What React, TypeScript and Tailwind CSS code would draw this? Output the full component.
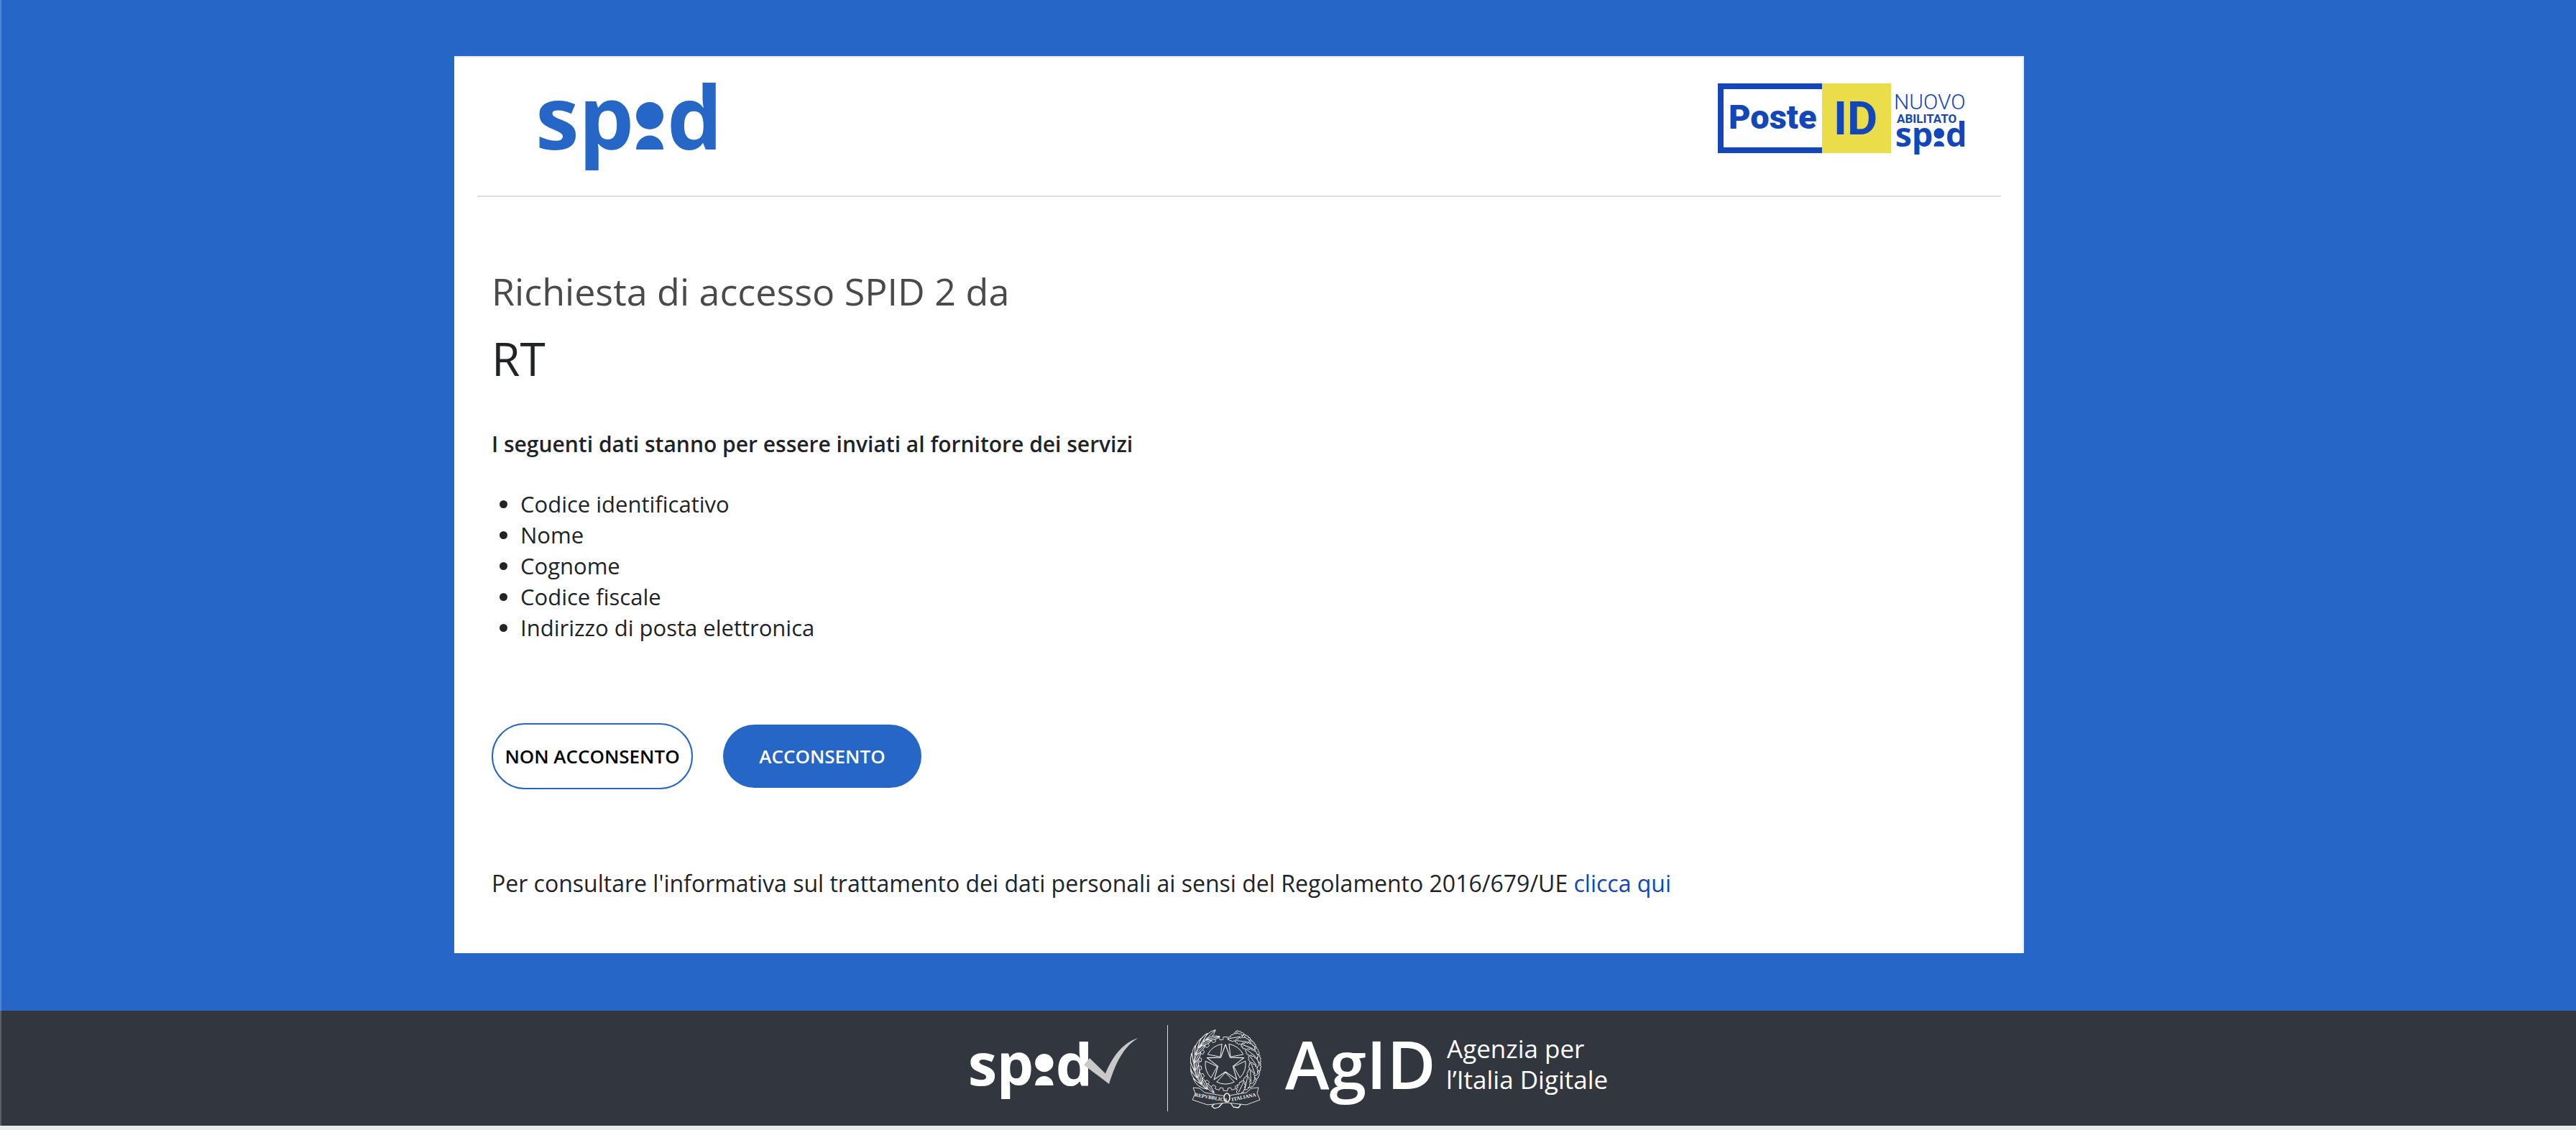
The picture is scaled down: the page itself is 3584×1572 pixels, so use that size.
import React from 'react';

const DATA_FIELDS = [
  'Codice identificativo',
  'Nome',
  'Cognome',
  'Codice fiscale',
  'Indirizzo di posta elettronica',
];

/* Letters and figure of the SPID word mark, drawn in a 244 x 120 box. */
function SpidMark() {
  return (
    <g fill="currentColor" fontFamily="'Open Sans', sans-serif" fontWeight="700" fontSize="122">
      <text x="-5" y="93">s</text>
      <text x="55" y="93">p</text>
      <circle cx="154" cy="46" r="19" />
      <path d="M135 93a19 19.500 0 0 1 38 0z" />
      <text x="178" y="93">d</text>
    </g>
  );
}

function SpidLogo() {
  return (
    <svg viewBox="0 0 244 120" className="h-[120px] w-[244px] overflow-visible text-[#2666c6]" role="img" aria-label="spid">
      <SpidMark />
    </svg>
  );
}

function PosteIdLogo() {
  return (
    <svg
      viewBox="0 -1 345 98"
      className="h-[98px] w-[345px] overflow-visible text-[#1346b9]"
      role="img"
      aria-label="PosteID abilitato spid"
    >
      <path d="M145 4H4v89h141" fill="none" stroke="currentColor" strokeWidth="8" />
      <rect x="145" y="0" width="96" height="97" fill="#ebdd49" />
      <g fill="currentColor" fontFamily="Roboto, sans-serif">
        <text x="15" y="63" fontSize="47" fontWeight="900">Poste</text>
        <text x="161" y="71" fontSize="65" fontWeight="700">ID</text>
        <text x="245" y="36" fontSize="30" fontWeight="300">NUOVO</text>
        <text x="249" y="55" fontSize="17" fontWeight="700">ABILITATO</text>
      </g>
      <svg x="248" y="52" width="95" height="46" viewBox="0 0 244 120" overflow="visible">
        <SpidMark />
      </svg>
    </svg>
  );
}

function SpidCheckLogo() {
  return (
    <svg viewBox="0 0 235 84" className="h-[84px] w-[235px] overflow-visible text-white" role="img" aria-label="spid">
      <svg x="0" y="4" width="165" height="80" viewBox="0 0 244 120" overflow="visible">
        <SpidMark />
      </svg>
      <path d="M167 28l22 21.500C197 30 211 7 234.500 0 213 13 203 36 194 64L159 37.500z" fill="#c9c9c9" />
    </svg>
  );
}

const CX = 49;
const CY = 51;

function polar(r: number, deg: number) {
  const a = ((deg - 90) * Math.PI) / 180;
  return `${(CX + r * Math.cos(a)).toFixed(2)} ${(CY + r * Math.sin(a)).toFixed(2)}`;
}

const STAR = `M${Array.from({ length: 10 }, (_, i) => polar(i % 2 ? 11 : 27, i * 36)).join('L')}z`;

const SECTORS = Array.from({ length: 5 }, (_, i) => {
  const mid = i * 72 + 36;
  return `M${polar(12, mid)}L${polar(28, mid - 26)}A28 28 0 0 1 ${polar(28, mid + 26)}z`;
}).join('');

const TEETH = 20;
const GEAR = `M${Array.from({ length: TEETH }, (_, i) => {
  const s = 360 / TEETH;
  const a = i * s;
  return [polar(37.5, a - s * 0.25), polar(37.5, a + s * 0.25), polar(34, a + s * 0.3), polar(34, a + s * 0.7)].join('L');
}).join('L')}z`;

type LeafProps = { angle: number; r: number; tilt: number };

function OliveLeaf({ angle, r, tilt, length, width }: LeafProps & { length: number; width: number }) {
  return (
    <g transform={`translate(${polar(r, angle)}) rotate(${angle + tilt})`}>
      <path d={`M${-length / 2} 0Q0 ${-width} ${length / 2} 0Q0 ${width} ${-length / 2} 0zM${-length / 2} 0H${length / 2}`} />
    </g>
  );
}

function OakLeaf({ angle, r, tilt }: LeafProps) {
  return (
    <g transform={`translate(${polar(r, angle)}) rotate(${angle + tilt})`}>
      <path d="M-9 0q1-4 3-2 1-4 4-2 1-3 4-1 3-2 4 1 4-1 4 4 0 4-4 3-1 3-4 1-2 3-4 0-4 2-4-1-3 1-3-3zM-8 0H8" />
    </g>
  );
}

function RepublicEmblem() {
  return (
    <svg viewBox="0 0 100 114" className="h-[114px] w-[100px]" role="img" aria-label="Repubblica Italiana">
      <g fill="none" stroke="#f2f2f2" strokeWidth="1" strokeLinejoin="round">
        <path d={GEAR} strokeWidth="0.9" />
        <path d={STAR} strokeWidth="1.1" />
        <path d={SECTORS} />
        <g fill="#32363e" strokeWidth="0.9">
          {[232, 246, 260, 274, 288, 302, 316, 330].map((a) => (
            <OliveLeaf key={a} angle={a} r={45} tilt={-14} length={24} width={7} />
          ))}
          {[214, 228, 242, 256, 270, 284, 300, 318, 334].map((a) => (
            <OliveLeaf key={a} angle={a} r={40} tilt={14} length={20} width={5} />
          ))}
          {[28, 42, 56, 70, 84, 98, 112, 126].map((a) => (
            <OakLeaf key={a} angle={a} r={44} tilt={18} />
          ))}
          {[20, 36, 52, 68, 84, 100, 116, 132, 146].map((a) => (
            <OakLeaf key={a} angle={a} r={39} tilt={-30} />
          ))}
          <path d="M45 96L30 110l4 3 6-2 12-14zM55 96l15 12-3 4-7-1-9-13z" strokeWidth="1.3" />
          <path d="M4 84l9 1 7 6 29 5 29-5 7-6 10-1-2 8 4 9-19 7-27-3-27 3-21-7 4-9z" />
        </g>
        <ellipse cx="51" cy="98" rx="4" ry="6" fill="#32363e" strokeWidth="1.5" />
      </g>
      <g fill="#f2f2f2" fontFamily="'Liberation Serif', serif" fontSize="7" fontWeight="700">
        <text x="6" y="96" transform="rotate(10 6 96)">REPVBBLICA</text>
        <text x="58" y="103" transform="rotate(-12 58 103)">ITALIANA</text>
      </g>
    </svg>
  );
}

function AgidLogo() {
  return (
    <svg
      viewBox="0 0 446 110"
      className="h-[110px] w-[446px] overflow-visible"
      role="img"
      aria-label="AgID Agenzia per l’Italia Digitale"
    >
      <g fill="#ffffff" fontFamily="'Open Sans', sans-serif">
        <text x="-1" y="84" fontSize="93" fontWeight="600">AgID</text>
        <text x="224" y="41" fontSize="35">Agenzia per</text>
        <text x="223" y="84" fontSize="35">l’Italia Digitale</text>
      </g>
    </svg>
  );
}

export default function App() {
  return (
    <div className="bg-[#ebebea] pb-[6px] font-['Open_Sans',sans-serif] text-[#212327]">
      <main className="bg-[#2666c6] pt-[78px] pb-20 shadow-[inset_2px_0_0_rgba(255,255,255,0.2)]">
        <div className="mx-auto max-w-[2320px] pr-[136px]">
          <section className="border-t-2 border-r-2 border-[#ebebeb] bg-white">
            <header className="mr-[30px] ml-8 flex items-start justify-between border-b-2 border-[#dddddd] pt-[35px] pr-[49px] pb-[37px] pl-[86px]">
              <SpidLogo />
              <PosteIdLogo />
            </header>

            <div className="px-[52px] pt-[99px] pb-[73px]">
              <h1 className="text-[52px] leading-[64px] text-[#4a4a4a]">Richiesta di accesso SPID 2 da</h1>
              <h2 className="mt-[22px] text-[64px] leading-[80px]">RT</h2>
              <p className="mt-[57px] text-[30px] leading-[44px] font-semibold">
                I seguenti dati stanno per essere inviati al fornitore dei servizi
              </p>
              <ul className="mt-10 list-disc pl-10 text-[31px] leading-[43px]">
                {DATA_FIELDS.map((field) => (
                  <li key={field}>{field}</li>
                ))}
              </ul>

              <div className="mt-[111px] flex items-center gap-[42px] text-[26px] leading-9 font-semibold">
                <button type="button" className="h-[92px] w-[280px] rounded-full border-2 border-[#2666c6] bg-white text-black">
                  NON ACCONSENTO
                </button>
                <button type="button" className="h-[88px] w-[276px] rounded-full bg-[#2666c6] text-white">
                  ACCONSENTO
                </button>
              </div>

              <p className="mt-[107px] text-[32px] leading-[48px]">
                Per consultare l'informativa sul trattamento dei dati personali ai sensi del Regolamento 2016/679/UE{' '}
                <a href="#informativa" className="text-[#1346b9]">
                  clicca qui
                </a>
              </p>
            </div>
          </section>
        </div>
      </main>

      <footer className="flex h-40 items-center justify-center bg-[#32363e] shadow-[inset_2px_0_0_rgba(255,255,255,0.2)]">
        <SpidCheckLogo />
        <div className="ml-10 h-[120px] w-px bg-[#dddddd]" />
        <div className="ml-[31px]">
          <RepublicEmblem />
        </div>
        <div className="ml-[33px]">
          <AgidLogo />
        </div>
      </footer>
    </div>
  );
}
